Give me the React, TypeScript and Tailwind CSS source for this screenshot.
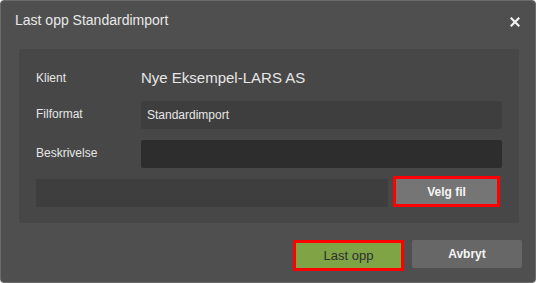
export default function App() {
  return (
    <div className="w-[537px] h-[283px] bg-white font-['Liberation_Sans',Arial,sans-serif]">
      <div className="w-[536px] h-[283px] bg-[#4f4f4f] border border-[#6b6b6b] rounded-[4px] flex flex-col">
        <div className="flex items-center justify-between h-[38px] pl-[14px] pr-[15px] pt-[1px]">
          <span className="text-[14px] text-[#e8e8e8]">Last opp Standardimport</span>
          <svg width="10" height="10" viewBox="0 0 10 10" className="mt-[2px]">
            <path d="M1.5 1.5 L8.5 8.5 M8.5 1.5 L1.5 8.5" stroke="#f2f2f2" strokeWidth="2.2" strokeLinecap="square" />
          </svg>
        </div>

        <div className="ml-[18px] mt-[10px] w-[500px] bg-[#474747] rounded-[2px] pl-[17px] pr-[17px] pt-[15px] pb-[16px] flex flex-col">
          <div className="flex items-center h-[28px]">
            <span className="w-[105px] text-[12px] text-[#e6e6e6]">Klient</span>
            <span className="text-[15px] text-[#e6e6e6]">Nye Eksempel-LARS AS</span>
          </div>
          <div className="flex items-center h-[28px] mt-[9px]">
            <span className="w-[105px] text-[12px] text-[#e6e6e6] -mt-[3px]">Filformat</span>
            <div className="w-[361px] h-[28px] bg-[#3e3e3e] rounded-[2px] flex items-center pl-[6px] text-[12px] text-[#e6e6e6]">
              Standardimport
            </div>
          </div>
          <div className="flex items-center h-[28px] mt-[11px]">
            <span className="w-[105px] text-[12px] text-[#e6e6e6] -mt-[3px]">Beskrivelse</span>
            <div className="w-[361px] h-[28px] bg-[#2d2d2d] rounded-[2px]" />
          </div>
          <div className="flex items-end h-[30px] mt-[9px]">
            <div className="w-[352px] h-[28px] bg-[#3e3e3e] rounded-[2px]" />
            <div className="ml-[5px] w-[107px] h-[31px] border-[3px] border-[#ff0000] bg-[#757575] flex items-center justify-center text-[12px] font-bold text-[#f5f5f5]">
              Velg fil
            </div>
          </div>
        </div>

        <div className="flex justify-end items-start gap-[8px] pr-[13px] mt-[17px]">
          <div className="w-[111px] h-[31px] border-[3px] border-[#ff0000] bg-[#7ea446] flex items-center justify-center text-[13px] text-[#2f2f2f]">
            Last opp
          </div>
          <div className="w-[110px] h-[28px] bg-[#676767] rounded-[2px] flex items-center justify-center text-[12px] font-bold text-[#f5f5f5]">
            Avbryt
          </div>
        </div>
      </div>
    </div>
  );
}
